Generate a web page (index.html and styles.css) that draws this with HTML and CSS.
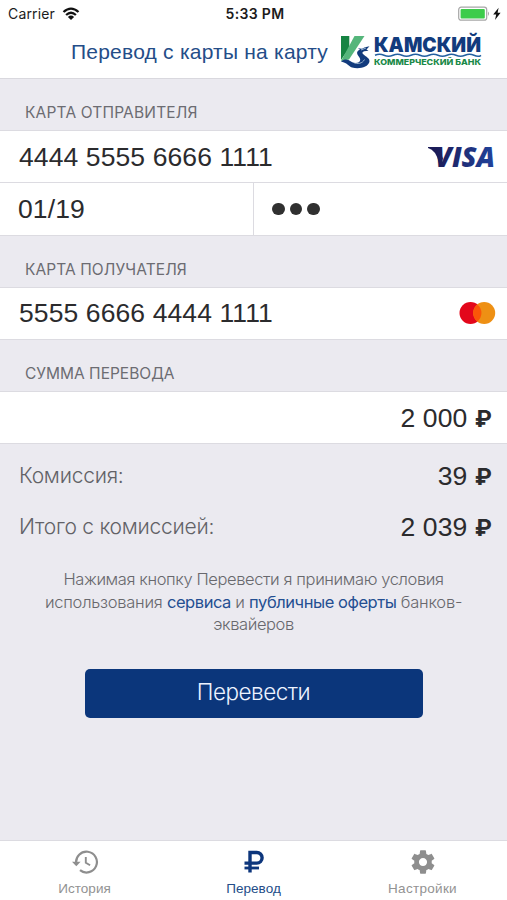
FILE: index.html
```html
<!DOCTYPE html>
<html lang="ru">
<head>
<meta charset="utf-8">
<title>Перевод с карты на карту</title>
<link rel="stylesheet" href="styles.css">
</head>
<body>
<div class="app">
  <header class="header">
    <div class="status">
      <div class="carrier"><span>Carrier</span>
        <svg width="18" height="14" viewBox="0 0 18 14" fill="none" stroke="#111" stroke-width="2.3"><path d="M1.5 5Q9-1.8 16.5 5M4.1 8Q9 3.6 13.9 8"/><path d="M9 13 5.9 9.9Q9 7.2 12.1 9.9Z" fill="#111" stroke="none"/></svg>
      </div>
      <div class="clock">5:33 PM</div>
      <svg class="battery" width="44" height="16" viewBox="0 0 44 16"><rect x=".7" y="1.2" width="28" height="13" rx="2.5" fill="#fff" stroke="#a6a6a6" stroke-width="1.2"/><rect x="2.6" y="3" width="24.2" height="9.4" rx="1" fill="#3dcc4b"/><path d="M30 5.5q2 2 0 4.5z" fill="#a6a6a6"/><path d="M40.6 1.7 35.2 8.5h3l-1.2 5.4 5.6-7.1h-3z" fill="#111"/></svg>
    </div>
    <div class="titlebar">
      <h1 class="title">Перевод с карты на карту</h1>
      <svg class="bank" width="150" height="40" viewBox="0 -2 150 40">
        <path d="M0 2h8.3v12L0 26z" fill="#168442"/>
        <path d="M13.5 2h10L8 25.5 0 27z" fill="#55b67b"/>
        <path d="M0 27.5c4-3 7-2 10 .1 4 2.7 9 1.4 9.2-1.6.2-2.6-2.5-4-3-6.2-.5-2 .8-3.5 2.8-4l-2-1.5 4 .5 3-1.5 4.5-1-3 3.2 2 1.3-4.3.4c-1.6.5-2.3 1.5-1.2 2.8 3 3 7.2 4 6.4 8-1.3 5-9.8 7.500-17.4 5.500-3.500-1-4-4.500-11-6z" fill="#123b7d"/>
        <path d="M12.5 28.5c4 2 9 1 11-3M20 16l5-2" fill="none" stroke="#b9cee0" stroke-width=".8"/>
        <text class="bank-name" x="33" y="17.8" textLength="107" lengthAdjust="spacingAndGlyphs">КАМСКИЙ</text>
        <path d="M34 21.300q4.500-2 9 0t9 0 9 0 9 0 9 0 9 0 9 0 9 0 9 0 9 0 9 0 7 0" fill="none" stroke="#2460a0" stroke-width="1.500"/>
        <text class="bank-kind" x="33" y="31" textLength="107" lengthAdjust="spacingAndGlyphs">КОММЕРЧЕСКИЙ БАНК</text>
      </svg>
    </div>
  </header>

  <main class="content">
    <h2 class="section sender">КАРТА ОТПРАВИТЕЛЯ</h2>
    <div class="row">
      <span class="number">4444 5555 6666 1111</span>
      <svg width="70" height="44" viewBox="0 -9 70 44">
        <defs><linearGradient id="visa" x1="0" x2="1"><stop stop-color="#1c1c58"/><stop offset="1" stop-color="#21439c"/></linearGradient></defs>
        <path d="M2 3h11l4 12-4 4Q10 6 2 4z" fill="#1c1c58"/>
        <text class="visa" x="9" y="23" textLength="60" lengthAdjust="spacingAndGlyphs">VISA</text>
      </svg>
    </div>
    <div class="row split">
      <div class="expiry number">01/19</div>
      <div class="cvc"><i></i><i></i><i></i></div>
    </div>
    <h2 class="section receiver">КАРТА ПОЛУЧАТЕЛЯ</h2>
    <div class="row">
      <span class="number up">5555 6666 4444 1111</span>
      <svg class="mc" width="37" height="22" viewBox="0 0 37 22"><circle cx="11.5" cy="11" r="11" fill="#e3071b"/><circle cx="25.2" cy="11" r="11" fill="#ee9014"/><path d="M18.3 2.4a11 11 0 0 1 0 17.2 11 11 0 0 1 0-17.2z" fill="#fb5608"/></svg>
    </div>
    <h2 class="section">СУММА ПЕРЕВОДА</h2>
    <div class="row amount"><span class="number">2 000 <b class="rub">₽</b></span></div>
    <div class="total"><span class="label">Комиссия:</span><span class="number">39 <b class="rub">₽</b></span></div>
    <div class="total"><span class="label">Итого с комиссией:</span><span class="number">2 039 <b class="rub">₽</b></span></div>
    <p class="terms">Нажимая кнопку Перевести я принимаю условия<br><span class="wide">использования <a>сервиса</a> и <a>публичные оферты</a> банков-</span><br>эквайеров</p>
    <button class="submit">Перевести</button>
  </main>

  <nav class="tabs">
    <div class="tab">
      <svg width="28" height="26" viewBox="0 0 28 26" fill="none" stroke="#8e8e8e" stroke-width="2.2"><path d="M5.2 14.5A10.4 10.4 0 1 1 9 21.2"/><path d="M1 12.8h8.6l-4.3 4.4z" fill="#8e8e8e" stroke="none"/><path d="M14.8 8v5.7l4.3 2.6" stroke-width="1.9"/></svg>
      <span>История</span>
    </div>
    <div class="tab active">
      <svg width="28" height="26" viewBox="0 0 28 26" fill="none" stroke="#0d367c" stroke-width="3.4"><path d="M10 23.5V3.5h6.8a5.3 5.3 0 0 1 0 10.6H4.5"/><path d="M4.5 19h14.500" stroke-width="2.8"/></svg>
      <span>Перевод</span>
    </div>
    <div class="tab">
      <svg width="28" height="28" viewBox="0 0 24 24" fill="#8e8e8e"><path d="M19.43 12.98c.04-.32.07-.64.07-.98s-.03-.66-.07-.98l2.11-1.65c.19-.15.24-.42.12-.64l-2-3.46c-.12-.22-.39-.3-.61-.22l-2.49 1c-.52-.4-1.08-.73-1.69-.98l-.38-2.65C14.46 2.18 14.25 2 14 2h-4c-.25 0-.46.18-.49.42l-.38 2.65c-.61.25-1.17.59-1.69.98l-2.49-1c-.23-.09-.49 0-.61.22l-2 3.46c-.13.22-.07.49.12.64l2.11 1.65c-.04.32-.07.65-.07.98s.03.66.07.98l-2.11 1.65c-.19.15-.24.42-.12.64l2 3.46c.12.22.39.3.61.22l2.49-1c.52.4 1.08.73 1.69.98l.38 2.65c.03.24.24.42.49.42h4c.25 0 .46-.18.49-.42l.38-2.65c.61-.25 1.17-.59 1.69-.98l2.49 1c.23.09.49 0 .61-.22l2-3.46c.12-.22.07-.49-.12-.64l-2.11-1.65zM12 15.5c-1.93 0-3.5-1.57-3.5-3.5s1.57-3.5 3.5-3.5 3.5 1.57 3.5 3.5-1.57 3.5-3.5 3.5z"/></svg>
      <span class="settings">Настройки</span>
    </div>
  </nav>
</div>
</body>
</html>
```

FILE: styles.css
```css
* { box-sizing: border-box; }
body { margin: 0; font-family: "Liberation Sans", sans-serif; color: #2b2b2d; background: #ebeaf0; }
h1, h2, p { margin: 0; font-weight: 400; }
svg { display: block; flex: none; }
.app { display: flex; flex-direction: column; height: 900px; }
.header { height: 79px; background: #fff; border-bottom: 1px solid #d9d8de; }
.status { display: grid; grid-template-columns: 1fr auto 1fr; align-items: center; height: 27px; padding: 0 5px 0 8px; font: 14px/18px Inter, sans-serif; color: #1c1c1c; }
.carrier { display: flex; align-items: center; gap: 7px; letter-spacing: .15px; }
.clock { font-weight: 600; font-size: 14px; letter-spacing: .35px; }
.battery { justify-self: end; }
.titlebar { display: flex; align-items: center; height: 50px; padding-left: 71px; gap: 12px; }
.title { width: 258px; font-size: 21px; letter-spacing: .22px; line-height: 24px; color: #244d88; white-space: nowrap; }
.bank-name { font: 900 20.5px Inter, sans-serif; fill: #123b7d; }
.bank-kind { font: 800 8px Inter, sans-serif; fill: #1b8a48; }
.content { flex: 1; display: flex; flex-direction: column; }
.section { height: 51px; padding: 25px 25px 0; font: 400 15.5px/18px Inter, sans-serif; color: #6c6c72; white-space: nowrap; }
.sender { letter-spacing: .17px; }
.receiver { letter-spacing: .08px; }
.row { display: flex; align-items: center; justify-content: space-between; height: 53px; padding: 0 11px 0 19px; background: #fff; border-top: 1px solid #dcdbe1; border-bottom: 1px solid #dcdbe1; }
.number { font-size: 26.5px; line-height: 32px; letter-spacing: .1px; white-space: nowrap; }
.up { margin-top: -2px; }
.mc { margin-top: -2px; }
.split { height: 53px; padding: 0; border-top: 0; }
.expiry { width: 254px; height: 52px; padding: 10px 0 0 18px; border-right: 1px solid #dcdbe1; }
.cvc { flex: 1; display: flex; gap: 5px; padding-left: 18px; }
.cvc i { width: 12.5px; height: 12.5px; border-radius: 50%; background: #303030; }
.amount { justify-content: flex-end; padding-right: 15px; }
.rub { font: 700 23px Inter, sans-serif; }
.visa { font: italic 800 28.5px "Open Sans", sans-serif; fill: url(#visa); }
.total { display: flex; align-items: center; justify-content: space-between; height: 51px; padding: 13px 15px 0 19px; }
.label { font: 300 21px/28px Inter, sans-serif; color: #626267; letter-spacing: -.25px; }
.terms { margin-top: 22px; text-align: center; font: 300 16.5px/22.5px Inter, sans-serif; letter-spacing: -.4px; color: #68686d; white-space: nowrap; }
.wide { letter-spacing: -.25px; }
.terms a { color: #244f92; font-weight: 400; letter-spacing: -.45px; }
.submit { width: 338px; height: 49px; margin: 33px auto 0; padding: 0 0 2px; border: 0; border-radius: 5px; background: #0b367b; color: #edf3ff; font: 300 22.5px/30px Inter, sans-serif; letter-spacing: -.5px; }
.tabs { display: grid; grid-template-columns: repeat(3, 1fr); height: 60px; background: #fff; border-top: 1px solid #dcdbe1; }
.tab { display: flex; flex-direction: column; align-items: center; font-size: 13.5px; line-height: 16px; color: #929292; }
.tab svg { height: 28px; margin-top: 7px; }
.tab span { margin-top: 5px; letter-spacing: .05px; }
.tab .settings { letter-spacing: .3px; }
.active { color: #244d88; }
```
